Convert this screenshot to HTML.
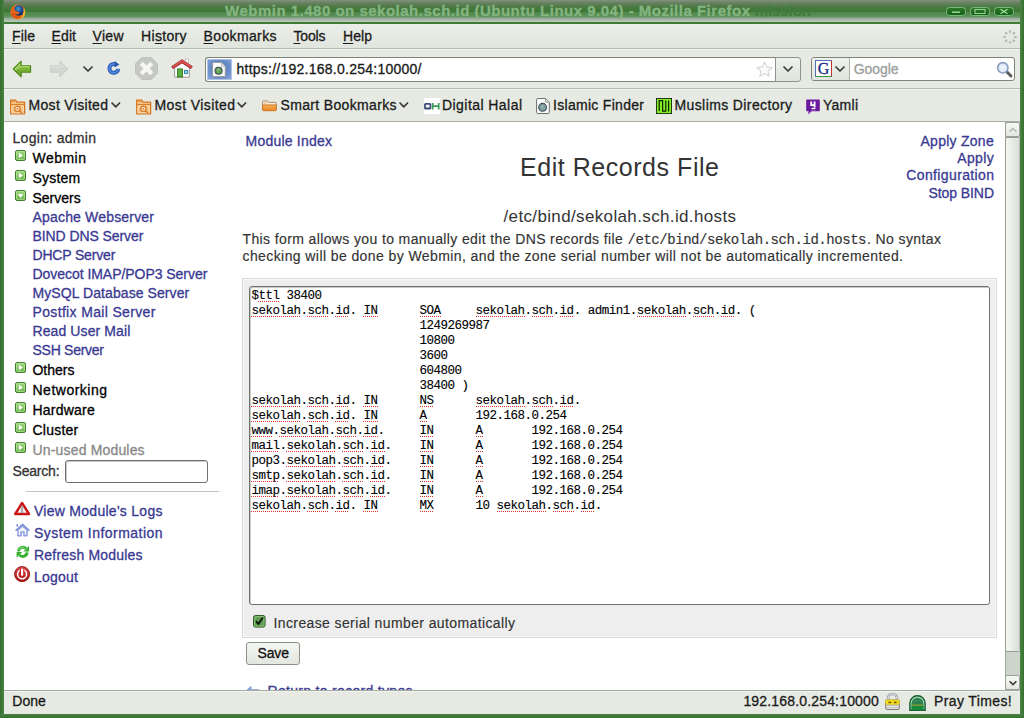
<!DOCTYPE html>
<html>
<head>
<meta charset="utf-8">
<title>Webmin 1.480 on sekolah.sch.id (Ubuntu Linux 9.04) - Mozilla Firefox</title>
<style>
html,body{margin:0;padding:0;}
body{width:1024px;height:718px;overflow:hidden;position:relative;background:#3f7a38;font-family:"Liberation Sans",sans-serif;font-size:14px;color:#1a1a1a;}
.abs{position:absolute;}
.t{position:absolute;white-space:pre;line-height:20px;height:20px;-webkit-text-stroke:0.3px;}
svg{position:absolute;overflow:visible;}
#titlebar{left:4px;top:0;width:1016px;height:24px;background:linear-gradient(to bottom,#80917d 0px,#748970 1.5px,#66805f 3px,#5a7d52 5px,#4a7a40 7px,#437a3a 9px,#3f7536 11.5px,#518848 11.6px,#518a4c 14px,#5f9360 16.5px,#7a9c78 17.5px,#9aab99 18.5px,#a8b4a8 19.5px,#b6cab3 21.5px,#b8d0b4 22px,#3f7a38 22px,#3f7a38 24px);}
#chrome{left:4px;top:24px;width:1016px;height:98px;background:#e6eae3;}
#menubar{left:4px;top:24px;width:1016px;height:24px;background:linear-gradient(to bottom,#ebeee9,#e0e5dd);}
.sep{position:absolute;left:4px;width:1016px;height:1px;background:#b4bcb2;}
.hl{position:absolute;left:4px;width:1016px;height:1px;background:#f4f6f2;}
.m{font-family:"Liberation Mono",monospace;}
.z{z-index:6;}
.ns{-webkit-text-stroke:0;}
.ls{-webkit-text-stroke:0.15px;}
.menu u{text-decoration:underline;text-underline-offset:2px;}
#content{left:4px;top:122px;width:1001px;height:568px;background:#fff;}
#clip{left:4px;top:122px;width:1001px;height:567px;overflow:hidden;}
#clip .t{margin-left:-4px;margin-top:-122px;}
#statusbar{z-index:5;left:4px;top:690px;width:1016px;height:24px;background:#e6eae3;border-top:1px solid #a4aca2;box-sizing:border-box;box-shadow:inset 0 1px 0 #f2f4f0;}
#urlbar{left:205px;top:57px;width:571px;height:25px;box-sizing:border-box;border:1px solid #7d857b;border-right:none;border-radius:3px 0 0 3px;background:#fff;}
#urldrop{left:775px;top:57px;width:26px;height:25px;box-sizing:border-box;border:1px solid #8b938a;border-radius:0 3px 3px 0;background:linear-gradient(#eef1ec,#dfe4dc);}
#idbox{left:207px;top:59px;width:25px;height:21px;background:radial-gradient(ellipse at 50% 45%,#5a80c0 0%,#6388c6 45%,#8eaadb 100%);box-shadow:inset 0 0 0 1px rgba(220,230,246,0.55);}
#searchbar{left:811px;top:57px;width:204px;height:24px;box-sizing:border-box;border:1px solid #7d857b;border-radius:3px;background:#fff;}
#engine{left:812px;top:58px;width:37px;height:22px;background:linear-gradient(#eef1ec,#dfe4dc);border-right:1px solid #a8b0a6;border-radius:2px 0 0 2px;}
#formbox{left:242px;top:278px;width:755px;height:360px;box-sizing:border-box;background:#eeeeee;border:1px solid #d9d9d9;box-shadow:inset 0 0 0 1px #f8f8f8;}
#ta{left:249px;top:286px;width:741px;height:319px;box-sizing:border-box;background:#fff;border:1px solid #6b736b;border-radius:3px;box-shadow:inset 1px 1px 0 #c8ccc8;}
#tatext{left:251.4px;top:289px;margin:0;font-family:"Liberation Mono",monospace;font-size:12.5px;letter-spacing:-0.5px;line-height:15px;color:#000;white-space:pre;-webkit-text-stroke:0.12px;}
#tatext i{font-style:normal;background:repeating-linear-gradient(to right,#e03030 0,#e03030 1px,transparent 1px,transparent 2px) left 12px/100% 1px no-repeat;}
#savebtn{left:246px;top:642px;width:54px;height:23px;box-sizing:border-box;border:1px solid #8a9288;border-radius:3px;background:linear-gradient(#f4f6f2,#e2e6df);}
#sinput{left:65px;top:460px;width:143px;height:23px;box-sizing:border-box;border:1px solid #6b736b;border-radius:3px;background:#fff;box-shadow:inset 1px 1px 0 #c8ccc8;}
#hr{left:26px;top:491px;width:193px;height:1px;background:#c2c2c2;}
#scroll{left:1005px;top:122px;width:15px;height:568px;background:#cdd4ca;border-left:1px solid #a4aca2;box-sizing:border-box;}
#thumb{left:1005px;top:137px;width:15px;height:515px;box-sizing:border-box;border:1px solid #969e94;border-right-color:#b4bcb2;border-radius:2px;background:linear-gradient(to right,#f6f8f4,#e6eae3 55%,#dbe0d8);}
.sbtn{left:1005px;width:15px;height:15px;box-sizing:border-box;border:1px solid #9aa298;border-radius:2px;background:linear-gradient(#f6f8f4,#e4e8e1);}
</style>
</head>
<body>
<div class="abs" style="left:0;top:0;width:4px;height:718px;background:linear-gradient(to right,#356e30,#3f7a38 50%,#4a8044)"></div><div class="abs" style="left:1020px;top:0;width:4px;height:718px;background:linear-gradient(to right,#4f8649,#3f7a38 50%,#366f31)"></div><div class="abs" style="left:0;top:714px;width:1024px;height:4px;background:linear-gradient(to bottom,#4a8044,#3f7a38 50%,#356e30)"></div>
<div id="titlebar" class="abs"></div>
<div id="chrome" class="abs"></div>
<div id="menubar" class="abs"></div>
<div class="sep" style="top:48px"></div>
<div class="hl" style="top:49px"></div>
<div class="sep" style="top:88px"></div>
<div class="hl" style="top:89px"></div>
<div class="sep" style="top:121px;background:#a8b0a6"></div>
<div id="urlbar" class="abs"></div><div id="urldrop" class="abs"></div><div id="idbox" class="abs"></div>
<div id="searchbar" class="abs"></div><div id="engine" class="abs"></div>
<div id="content" class="abs"></div>
<div id="formbox" class="abs"></div>
<div id="ta" class="abs"></div>
<pre id="tatext" class="abs">$<i>ttl</i> 38400
<i>sekolah</i>.<i>sch</i>.<i>id</i>. <i>IN</i>      <i>SOA</i>     <i>sekolah</i>.<i>sch</i>.<i>id</i>. admin1.<i>sekolah</i>.<i>sch</i>.<i>id</i>. (
                        1249269987
                        10800
                        3600
                        604800
                        38400 )
<i>sekolah</i>.<i>sch</i>.<i>id</i>. <i>IN</i>      <i>NS</i>      <i>sekolah</i>.<i>sch</i>.<i>id</i>.
<i>sekolah</i>.<i>sch</i>.<i>id</i>. <i>IN</i>      <i>A</i>       192.168.0.254
<i>www</i>.<i>sekolah</i>.<i>sch</i>.<i>id</i>.     <i>IN</i>      <i>A</i>       192.168.0.254
<i>mail</i>.<i>sekolah</i>.<i>sch</i>.<i>id</i>.    <i>IN</i>      <i>A</i>       192.168.0.254
pop3.<i>sekolah</i>.<i>sch</i>.<i>id</i>.    <i>IN</i>      <i>A</i>       192.168.0.254
<i>smtp</i>.<i>sekolah</i>.<i>sch</i>.<i>id</i>.    <i>IN</i>      <i>A</i>       192.168.0.254
<i>imap</i>.<i>sekolah</i>.<i>sch</i>.<i>id</i>.    <i>IN</i>      <i>A</i>       192.168.0.254
<i>sekolah</i>.<i>sch</i>.<i>id</i>. <i>IN</i>      <i>MX</i>      10 <i>sekolah</i>.<i>sch</i>.<i>id</i>.</pre>
<div id="savebtn" class="abs"></div>
<div id="sinput" class="abs"></div>
<div id="hr" class="abs"></div>
<div id="scroll" class="abs"></div><div id="thumb" class="abs"></div>
<div class="sbtn abs" style="top:122px"></div><div class="sbtn abs" style="top:675px"></div>
<div id="statusbar" class="abs"></div>
<svg width="0" height="0" style="left:0;top:0"><defs>
<linearGradient id="gG" x1="0" y1="0" x2="0" y2="1"><stop offset="0" stop-color="#a4dc84"/><stop offset="1" stop-color="#62b044"/></linearGradient>
<linearGradient id="gBack" x1="0" y1="0" x2="0" y2="1"><stop offset="0" stop-color="#9ed04e"/><stop offset="1" stop-color="#5a9a1e"/></linearGradient>
<linearGradient id="gBtn" x1="0" y1="0" x2="0" y2="1"><stop offset="0" stop-color="#2f7a2c"/><stop offset="1" stop-color="#145c14"/></linearGradient>
<radialGradient id="gFx" cx="0.45" cy="0.35" r="0.6"><stop offset="0" stop-color="#4aa0d0"/><stop offset="0.6" stop-color="#1c4a94"/><stop offset="1" stop-color="#10285c"/></radialGradient>
<linearGradient id="gFox" x1="0" y1="0" x2="1" y2="1"><stop offset="0" stop-color="#f09020"/><stop offset="0.5" stop-color="#e86010"/><stop offset="1" stop-color="#f0c030"/></linearGradient>
<linearGradient id="gRed" x1="0" y1="0" x2="0" y2="1"><stop offset="0" stop-color="#e04848"/><stop offset="1" stop-color="#a81414"/></linearGradient>
<linearGradient id="gFold" x1="0" y1="0" x2="0" y2="1"><stop offset="0" stop-color="#f6b05c"/><stop offset="1" stop-color="#ee8622"/></linearGradient>
</defs></svg>
<svg style="left:10px;top:4.4px;" width="16" height="16" viewBox="0 0 16 16"><circle cx="8" cy="8" r="7.5" fill="url(#gFox)"/><circle cx="8.7" cy="6.4" r="5.3" fill="url(#gFx)"/><path d="M0.8 6.4 C1.6 3.6 3.4 2.4 5.2 2.6 C4 4.2 4.2 5.8 5.6 7 C7 8 9 7.6 9.6 8.8 C8.8 10.6 6.2 10.8 4.4 9.8 C5.8 12.6 9.8 13 12.6 10.4 C11.4 15 5.4 16 2.4 12.6 C1 11 0.4 8.6 0.8 6.4Z" fill="#e8641a"/><path d="M13.3 3.4 C15.6 6.6 15.2 11 12.4 13.4 C13.6 10.4 13.8 6.8 13.3 3.4Z" fill="#f4c838"/><path d="M2 9 C3 12.6 7 14.4 10.6 12.8" fill="none" stroke="#d84a10" stroke-width="1.2"/></svg>
<svg style="left:946px;top:7px;" width="20" height="9" viewBox="0 0 20 9"><rect x="0.5" y="0.5" width="19" height="8" rx="3" fill="url(#gBtn)" stroke="#7cba7c" stroke-width="1"/><rect x="6" y="4.4" width="8" height="1.6" fill="#8fd08f"/></svg>
<svg style="left:970px;top:7px;" width="20" height="9" viewBox="0 0 20 9"><rect x="0.5" y="0.5" width="19" height="8" rx="3" fill="url(#gBtn)" stroke="#7cba7c" stroke-width="1"/><rect x="5" y="2.5" width="10" height="4" fill="none" stroke="#8fd08f" stroke-width="1.1"/></svg>
<svg style="left:994px;top:7px;" width="20" height="9" viewBox="0 0 20 9"><rect x="0.5" y="0.5" width="19" height="8" rx="3" fill="url(#gBtn)" stroke="#7cba7c" stroke-width="1"/><path d="M6.5 2.2 L10 4.5 L13.5 2.2 M6.5 6.8 L10 4.5 L13.5 6.8" fill="none" stroke="#9fe09f" stroke-width="1.2"/></svg>
<svg style="left:1001.9px;top:28.9px;" width="16" height="16" viewBox="0 0 16 16"><path d="M12.20 8.00 L14.60 8.00" stroke="#a9b1a8" stroke-width="1.8"/><path d="M10.97 10.97 L12.67 12.67" stroke="#a9b1a8" stroke-width="1.8"/><path d="M8.00 12.20 L8.00 14.60" stroke="#a9b1a8" stroke-width="1.8"/><path d="M5.03 10.97 L3.33 12.67" stroke="#a9b1a8" stroke-width="1.8"/><path d="M3.80 8.00 L1.40 8.00" stroke="#a9b1a8" stroke-width="1.8"/><path d="M5.03 5.03 L3.33 3.33" stroke="#a9b1a8" stroke-width="1.8"/><path d="M8.00 3.80 L8.00 1.40" stroke="#a9b1a8" stroke-width="1.8"/><path d="M10.97 5.03 L12.67 3.33" stroke="#a9b1a8" stroke-width="1.8"/></svg>
<svg style="left:12px;top:60px;" width="20" height="18" viewBox="0 0 20 18"><path d="M9.2 1.2 L1.2 9 L9.2 16.8 L9.2 12.2 L18.6 12.2 L18.6 5.8 L9.2 5.8 Z" fill="url(#gBack)" stroke="#4c8a1c" stroke-width="1.1" stroke-linejoin="round"/><path d="M8.2 3.8 L3 9 L4 9.5 L8.2 6.8 L17.6 6.8" fill="none" stroke="#c8e890" stroke-width="0.9" opacity="0.9"/></svg>
<svg style="left:49px;top:60px;" width="20" height="18" viewBox="0 0 20 18"><path d="M10.8 1.2 L18.8 9 L10.8 16.8 L10.8 12.2 L1.4 12.2 L1.4 5.8 L10.8 5.8 Z" fill="#d3d7d1" stroke="#c9cdc7" stroke-width="1" stroke-linejoin="round"/><path d="M2.4 6.8 L11.8 6.8 L11.8 4 L15.5 7.6" fill="none" stroke="#e2e5e0" stroke-width="0.9"/></svg>
<svg style="left:83.0px;top:65.8px;" width="10" height="6" viewBox="0 0 10 6"><path d="M1 1 L5.0 5 L9 1" fill="none" stroke="#3a3a3a" stroke-width="1.7" stroke-linecap="round" stroke-linejoin="round"/></svg>
<svg style="left:106px;top:59px;" width="16" height="17" viewBox="0 0 16 17"><path d="M9.6 5.4 A4.4 4.4 0 1 0 12.2 9.8" fill="none" stroke="#2a58b0" stroke-width="4"/><path d="M9.6 5.4 A4.4 4.4 0 1 0 12.2 9.8" fill="none" stroke="#4f84dc" stroke-width="2"/><path d="M8.6 2 L13.4 5.6 L8.6 8.4 Z" fill="#2a58b0"/></svg>
<svg style="left:135px;top:57px;" width="23" height="23" viewBox="0 0 23 23"><path d="M6.8 0.5 L16.2 0.5 L22.5 6.8 L22.5 16.2 L16.2 22.5 L6.8 22.5 L0.5 16.2 L0.5 6.8 Z" fill="#c6c8c5" stroke="#bfc2be" stroke-width="1"/><path d="M6.2 6.2 L16.8 16.8 M16.8 6.2 L6.2 16.8" stroke="#f6f7f5" stroke-width="4.2" stroke-linecap="butt"/></svg>
<svg style="left:171px;top:58px;" width="22" height="20" viewBox="0 0 22 20"><rect x="14.2" y="0.9" width="3.2" height="5" fill="#f6f6f6" stroke="#b4b4b4" stroke-width="0.7"/><path d="M3.6 8 L3.6 19.2 L18.4 19.2 L18.4 8 L11 3.4 Z" fill="#fbfbfb" stroke="#9c9c9c" stroke-width="1"/><path d="M0.7 8.5 L11 1.7 L21.3 8.5 L19.9 10.6 L11 4.9 L2.1 10.6 Z" fill="#d04242" stroke="#a22a2a" stroke-width="0.9" stroke-linejoin="round"/><path d="M2 8.4 L11 2.6 L20 8.4" fill="none" stroke="#e87070" stroke-width="0.7"/><rect x="6.6" y="11" width="4.8" height="8" fill="#5cb040" stroke="#2e7a1e" stroke-width="1"/><rect x="13.5" y="12.4" width="3.2" height="3.2" fill="#8ad0e8" stroke="#3a88a8" stroke-width="1"/></svg>
<svg style="left:212px;top:61.5px;" width="14" height="15" viewBox="0 0 14 15"><path d="M1.6 0.5 L9.5 0.5 L13.3 4.2 L13.3 13.4 Q13.3 14.5 12.2 14.5 L1.6 14.5 Q0.6 14.5 0.6 13.4 L0.6 1.6 Q0.6 0.5 1.6 0.5 Z" fill="#fbfbfb" stroke="#9a9e9a" stroke-width="1"/><path d="M9.5 0.8 L9.5 4.2 L13 4.2" fill="#e4e4e4" stroke="#9a9e9a" stroke-width="0.6"/><circle cx="6.6" cy="8.7" r="3.5" fill="#62a050" stroke="#3c5058" stroke-width="1.1"/><path d="M5 7.1 Q6.5 6.1 8 7.499999999999999 Q7 9.6 5.6 9.299999999999999Z" fill="#b0d8c0" opacity="0.5"/></svg>
<svg style="left:756px;top:61px;" width="17" height="16" viewBox="0 0 17 16"><path d="M8.5 1 L10.7 5.9 L16 6.5 L12 10.1 L13.2 15.3 L8.5 12.6 L3.8 15.3 L5 10.1 L1 6.5 L6.3 5.9 Z" fill="#fbfbfb" stroke="#d4d6d2" stroke-width="1.1" stroke-linejoin="round"/></svg>
<svg style="left:782.9px;top:65.8px;" width="10" height="6" viewBox="0 0 10 6"><path d="M1 1 L5.0 5 L9 1" fill="none" stroke="#3a3a3a" stroke-width="1.7" stroke-linecap="round" stroke-linejoin="round"/></svg>
<svg style="left:815px;top:60.3px;" width="17" height="17" viewBox="0 0 17 17"><rect x="0.5" y="0.5" width="16" height="16" fill="#fff" stroke="#5070b0" stroke-width="1"/><path d="M0.5 16.5 L16.5 16.5" stroke="#3a9a3a" stroke-width="1"/><path d="M16.5 0.5 L16.5 16.5" stroke="#c03030" stroke-width="1"/><text x="8.5" y="14" font-family="Liberation Serif,serif" font-size="16" text-anchor="middle" fill="#1a2a80" stroke="#1a2a80" stroke-width="0.3">G</text></svg>
<svg style="left:834.8px;top:65.8px;" width="10" height="6" viewBox="0 0 10 6"><path d="M1 1 L5.0 5 L9 1" fill="none" stroke="#3a3a3a" stroke-width="1.7" stroke-linecap="round" stroke-linejoin="round"/></svg>
<svg style="left:996px;top:61px;" width="17" height="17" viewBox="0 0 17 17"><path d="M10 10 L15 15" stroke="#5a5a5a" stroke-width="3" stroke-linecap="round"/><circle cx="6.8" cy="6.8" r="5.2" fill="#cfe0f4" stroke="#8aa0c0" stroke-width="1.6"/><circle cx="6.8" cy="6.8" r="3.6" fill="#e8f0fa"/></svg>
<svg style="left:10px;top:98.6px;" width="16" height="16" viewBox="0 0 16 16"><path d="M0.7 1.2 L5.6 1.2 L6.8 3.2 L14.6 3.2 L14.6 14.8 L0.7 14.8 Z" fill="#f7c384" stroke="#d4741e" stroke-width="1.3" stroke-linejoin="round"/><path d="M1.6 2.4 L4.8 2.4" stroke="#e89040" stroke-width="1"/><path d="M1.2 5.6 L14 5.6" stroke="#d4741e" stroke-width="1"/><path d="M1.8 6.8 L13.4 6.8 L13.4 13.8 L1.8 13.8 Z" fill="none" stroke="#fbe0bc" stroke-width="0.8"/><circle cx="7.4" cy="9.8" r="2.7" fill="#fbe6cc" stroke="#d4741e" stroke-width="1.2"/><circle cx="7.4" cy="9.8" r="1" fill="#e08a3c"/><path d="M9.4 11.8 L12 14" stroke="#d4741e" stroke-width="1.4"/></svg>
<svg style="left:136px;top:98.6px;" width="16" height="16" viewBox="0 0 16 16"><path d="M0.7 1.2 L5.6 1.2 L6.8 3.2 L14.6 3.2 L14.6 14.8 L0.7 14.8 Z" fill="#f7c384" stroke="#d4741e" stroke-width="1.3" stroke-linejoin="round"/><path d="M1.6 2.4 L4.8 2.4" stroke="#e89040" stroke-width="1"/><path d="M1.2 5.6 L14 5.6" stroke="#d4741e" stroke-width="1"/><path d="M1.8 6.8 L13.4 6.8 L13.4 13.8 L1.8 13.8 Z" fill="none" stroke="#fbe0bc" stroke-width="0.8"/><circle cx="7.4" cy="9.8" r="2.7" fill="#fbe6cc" stroke="#d4741e" stroke-width="1.2"/><circle cx="7.4" cy="9.8" r="1" fill="#e08a3c"/><path d="M9.4 11.8 L12 14" stroke="#d4741e" stroke-width="1.4"/></svg>
<svg style="left:262px;top:99.6px;" width="15" height="12" viewBox="0 0 15 12"><path d="M0.7 9.6 L0.7 1.6 Q0.7 0.9 1.4 0.9 L5.2 0.9 L6.4 2.3 L13.4 2.3 Q14.2 2.3 14.2 3 L14.2 9.6 Z" fill="#f6efe6" stroke="#a88868" stroke-width="1"/><path d="M2 3 L5 3" stroke="#f0a860" stroke-width="1"/><path d="M1.2 4.9 L13.8 4.9 Q14.4 4.9 14.4 5.5 L14.2 10 Q14.2 10.7 13.5 10.7 L1.4 10.7 Q0.7 10.7 0.7 10 L0.6 5.5 Q0.6 4.9 1.2 4.9 Z" fill="url(#gFold)" stroke="#c8701c" stroke-width="0.9"/></svg>
<svg style="left:111.2px;top:101.85px;" width="9.6" height="5.9" viewBox="0 0 9.6 5.9"><path d="M1 1 L4.8 4.9 L8.6 1" fill="none" stroke="#3a3a3a" stroke-width="1.7" stroke-linecap="round" stroke-linejoin="round"/></svg>
<svg style="left:237.2px;top:101.85px;" width="9.6" height="5.9" viewBox="0 0 9.6 5.9"><path d="M1 1 L4.8 4.9 L8.6 1" fill="none" stroke="#3a3a3a" stroke-width="1.7" stroke-linecap="round" stroke-linejoin="round"/></svg>
<svg style="left:399.4px;top:101.85px;" width="9.6" height="5.9" viewBox="0 0 9.6 5.9"><path d="M1 1 L4.8 4.9 L8.6 1" fill="none" stroke="#3a3a3a" stroke-width="1.7" stroke-linecap="round" stroke-linejoin="round"/></svg>
<svg style="left:424px;top:98px;" width="16" height="16" viewBox="0 0 16 16"><rect width="16" height="16" fill="#fff"/><rect x="1" y="5.9" width="5.4" height="4.6" rx="0.6" fill="none" stroke="#3c4a78" stroke-width="1.8"/><path d="M8.7 5 L8.7 11.4 M14.7 5 L14.7 11.4 M8.7 8.2 L14.7 8.2" stroke="#3a9a58" stroke-width="1.7"/></svg>
<svg style="left:536px;top:98px;" width="14" height="16" viewBox="0 0 14 16"><path d="M1.6 0.5 L9.5 0.5 L13.3 4.2 L13.3 14.4 Q13.3 15.5 12.2 15.5 L1.6 15.5 Q0.6 15.5 0.6 14.4 L0.6 1.6 Q0.6 0.5 1.6 0.5 Z" fill="#fbfbfb" stroke="#6e726e" stroke-width="1"/><path d="M9.5 0.8 L9.5 4.2 L13 4.2" fill="#e4e4e4" stroke="#6e726e" stroke-width="0.6"/><circle cx="6.6" cy="9.28" r="3.9" fill="#7f9fa0" stroke="#3c5058" stroke-width="1.1"/><path d="M5 7.68 Q6.5 6.68 8 8.08 Q7 10.18 5.6 9.879999999999999Z" fill="#b0d8c0" opacity="0.5"/></svg>
<svg style="left:656px;top:98px;" width="16" height="16" viewBox="0 0 16 16"><rect x="0.5" y="0.5" width="15" height="15" fill="#82ee22" stroke="#0c1a06" stroke-width="1"/><path d="M3.2 13 L3.2 2.6 L6.6 2.6 L6.6 13.2 L9.8 13.2 L9.8 2.4 M12.6 2.4 L12.6 13.4" fill="none" stroke="#0e2208" stroke-width="1.2"/><rect x="1" y="1" width="14" height="14" fill="none" stroke="#a4f45a" stroke-width="0.5" opacity="0.6"/></svg>
<svg style="left:806px;top:98.5px;" width="14" height="16" viewBox="0 0 14 16"><path d="M1 0.5 L13 0.5 Q13.8 0.5 13.8 1.4 L13.8 11.4 Q13.8 12.2 13 12.2 L5.4 12.2 L2.2 15.4 L2.6 12.2 L1 12.2 Q0.2 12.2 0.2 11.4 L0.2 1.4 Q0.2 0.5 1 0.5Z" fill="#6c1a9e"/><path d="M5.2 2.4 L5.2 6.2 L8.6 6.2 M8.6 2.4 L8.6 8.6" fill="none" stroke="#fff" stroke-width="1.8"/><path d="M5.6 9.4 L9.4 9.4" stroke="#fff" stroke-width="1.2"/><path d="M6.2 11 L7.2 11 M8.2 11 L9.2 11" stroke="#f0e0ff" stroke-width="0.9"/></svg>
<svg style="left:15px;top:150px;" width="11" height="11" viewBox="0 0 11 11"><rect x="0.5" y="0.5" width="10" height="10" rx="1.6" fill="url(#gG)" stroke="#3f7f2c" stroke-width="1"/><rect x="1.6" y="1.6" width="7.8" height="7.8" rx="0.8" fill="none" stroke="#c4eca8" stroke-width="0.8" opacity="0.8"/><path d="M3.9 2.7 L8 5.5 L3.9 8.3 Z" fill="#fff"/></svg>
<svg style="left:15px;top:170px;" width="11" height="11" viewBox="0 0 11 11"><rect x="0.5" y="0.5" width="10" height="10" rx="1.6" fill="url(#gG)" stroke="#3f7f2c" stroke-width="1"/><rect x="1.6" y="1.6" width="7.8" height="7.8" rx="0.8" fill="none" stroke="#c4eca8" stroke-width="0.8" opacity="0.8"/><path d="M3.9 2.7 L8 5.5 L3.9 8.3 Z" fill="#fff"/></svg>
<svg style="left:15px;top:190px;" width="11" height="11" viewBox="0 0 11 11"><rect x="0.5" y="0.5" width="10" height="10" rx="1.6" fill="url(#gG)" stroke="#3f7f2c" stroke-width="1"/><rect x="1.6" y="1.6" width="7.8" height="7.8" rx="0.8" fill="none" stroke="#c4eca8" stroke-width="0.8" opacity="0.8"/><path d="M2.9 4 L8.3 4 L5.6 7.9 Z" fill="#fff"/></svg>
<svg style="left:15px;top:362px;" width="11" height="11" viewBox="0 0 11 11"><rect x="0.5" y="0.5" width="10" height="10" rx="1.6" fill="url(#gG)" stroke="#3f7f2c" stroke-width="1"/><rect x="1.6" y="1.6" width="7.8" height="7.8" rx="0.8" fill="none" stroke="#c4eca8" stroke-width="0.8" opacity="0.8"/><path d="M3.9 2.7 L8 5.5 L3.9 8.3 Z" fill="#fff"/></svg>
<svg style="left:15px;top:382px;" width="11" height="11" viewBox="0 0 11 11"><rect x="0.5" y="0.5" width="10" height="10" rx="1.6" fill="url(#gG)" stroke="#3f7f2c" stroke-width="1"/><rect x="1.6" y="1.6" width="7.8" height="7.8" rx="0.8" fill="none" stroke="#c4eca8" stroke-width="0.8" opacity="0.8"/><path d="M3.9 2.7 L8 5.5 L3.9 8.3 Z" fill="#fff"/></svg>
<svg style="left:15px;top:402px;" width="11" height="11" viewBox="0 0 11 11"><rect x="0.5" y="0.5" width="10" height="10" rx="1.6" fill="url(#gG)" stroke="#3f7f2c" stroke-width="1"/><rect x="1.6" y="1.6" width="7.8" height="7.8" rx="0.8" fill="none" stroke="#c4eca8" stroke-width="0.8" opacity="0.8"/><path d="M3.9 2.7 L8 5.5 L3.9 8.3 Z" fill="#fff"/></svg>
<svg style="left:15px;top:422px;" width="11" height="11" viewBox="0 0 11 11"><rect x="0.5" y="0.5" width="10" height="10" rx="1.6" fill="url(#gG)" stroke="#3f7f2c" stroke-width="1"/><rect x="1.6" y="1.6" width="7.8" height="7.8" rx="0.8" fill="none" stroke="#c4eca8" stroke-width="0.8" opacity="0.8"/><path d="M3.9 2.7 L8 5.5 L3.9 8.3 Z" fill="#fff"/></svg>
<svg style="left:15px;top:442px;" width="11" height="11" viewBox="0 0 11 11"><rect x="0.5" y="0.5" width="10" height="10" rx="1.6" fill="url(#gG)" stroke="#3f7f2c" stroke-width="1"/><rect x="1.6" y="1.6" width="7.8" height="7.8" rx="0.8" fill="none" stroke="#c4eca8" stroke-width="0.8" opacity="0.8"/><path d="M3.9 2.7 L8 5.5 L3.9 8.3 Z" fill="#fff"/></svg>
<svg style="left:14px;top:500.5px;" width="16.2" height="14.5" viewBox="0 0 16.2 14.5"><path d="M8.1 2 L15 13 L1.2 13 Z" fill="#f6f2f2" stroke="#cc1616" stroke-width="2.4" stroke-linejoin="round"/><path d="M8.1 5.2 L8.1 12" stroke="#8c9a9a" stroke-width="2"/><path d="M8.1 4.4 L8.1 11.8" stroke="#c8d0d0" stroke-width="0.8"/></svg>
<svg style="left:14.8px;top:522.8px;" width="15" height="13.6" viewBox="0 0 15 13.6"><path d="M2.2 1.2 L2.2 3.6" stroke="#6878c8" stroke-width="1.5"/><path d="M0.9 7.2 L7.5 1.2 L14.1 7.2 L12.4 7.2 L7.5 3.2 L2.6 7.2 Z" fill="#93a3e2" stroke="#7c8edc" stroke-width="1.3" stroke-linejoin="round"/><path d="M3 6.6 L3 12.8 L6 12.8 L6 9 L9 9 L9 12.8 L12 12.8 L12 6.6 L7.5 3 Z" fill="#f4f6fe" stroke="#8c9ee0" stroke-width="1.5" stroke-linejoin="round"/></svg>
<svg style="left:15.6px;top:545px;" width="13.6" height="13.6" viewBox="0 0 13.6 13.6"><path d="M2.5 6.3 A4.4 4.4 0 0 1 10 3.5" fill="none" stroke="#35ae2e" stroke-width="2.9"/><path d="M7.4 6.5 L13 6.5 L13 0.9 Z" fill="#35ae2e"/><path d="M11.1 7.3 A4.4 4.4 0 0 1 3.6 10.1" fill="none" stroke="#35ae2e" stroke-width="2.9"/><path d="M6.2 7.1 L0.6 7.1 L0.6 12.7 Z" fill="#35ae2e"/><path d="M2.6 5.4 A4.4 4.4 0 0 1 8.6 2.6" fill="none" stroke="#8fe480" stroke-width="0.9"/></svg>
<svg style="left:14px;top:565.8px;" width="16.2" height="16.2" viewBox="0 0 16.2 16.2"><circle cx="8.1" cy="8.1" r="7.6" fill="url(#gRed)" stroke="#8e1010" stroke-width="0.8"/><circle cx="8.1" cy="8.3" r="4.5" fill="none" stroke="#fff" stroke-width="1.5"/><path d="M8.1 3.2 L8.1 8.8" stroke="#c82020" stroke-width="4.2"/><path d="M8.1 3.6 L8.1 8.8" stroke="#fff" stroke-width="2.2" stroke-linecap="round"/></svg>
<svg style="left:253px;top:614.6px;" width="12.6" height="12.6" viewBox="0 0 12.6 12.6"><rect x="0.5" y="0.5" width="11.6" height="11.6" rx="2" fill="#6aa85c" stroke="#2e5a28" stroke-width="1"/><rect x="1.7" y="1.7" width="9.2" height="9.2" rx="1" fill="#5c9c50" stroke="#9ccc8c" stroke-width="0.7"/><path d="M3 6.2 L5.4 9 L9.8 2.6" fill="none" stroke="#101810" stroke-width="1.9"/></svg>
<svg style="left:244px;top:685.5px;" width="16" height="12" viewBox="0 0 16 12"><path d="M7 0.5 L0.8 6 L7 11.5 L7 8.2 L15 8.2 L15 3.8 L7 3.8 Z" fill="#8aa8e8" stroke="#6a88d0" stroke-width="0.8"/></svg>
<svg style="left:884.5px;top:693px;z-index:6;" width="15" height="17" viewBox="0 0 15 17"><path d="M3 8 L3 5.4 A4.5 4.4 0 0 1 12 5.4 L12 8" fill="none" stroke="#9c9ca6" stroke-width="2.6"/><path d="M3 8 L3 5.4 A4.5 4.4 0 0 1 12 5.4 L12 8" fill="none" stroke="#f2f2f6" stroke-width="1"/><rect x="0.8" y="7.2" width="13.4" height="9.2" rx="1.2" fill="#f2f2ee" stroke="#6a6a66" stroke-width="1"/><rect x="0.6" y="6.8" width="13.8" height="4.6" rx="0.8" fill="#f4e020" stroke="#c8b018" stroke-width="0.6"/><rect x="3.4" y="8.6" width="2.8" height="1.6" fill="#7a5a08"/><rect x="8.8" y="8.6" width="2.8" height="1.6" fill="#7a5a08"/><path d="M1.6 12.6 L13.4 12.6 M1.6 14.4 L13.4 14.4" stroke="#b4b4b0" stroke-width="0.9"/></svg>
<svg style="left:908.5px;top:694.6px;z-index:6;" width="17" height="15.4" viewBox="0 0 17 15.4"><path d="M0.9 15.2 L0.9 8.2 A7.6 7.4 0 0 1 16.1 8.2 L16.1 15.2 Z" fill="#a8e0b8" stroke="#14582a" stroke-width="1.4"/><path d="M2.6 15.2 L2.6 8.6 A5.9 5.8 0 0 1 14.4 8.6 L14.4 15.2 Z" fill="#2d7d4e"/><rect x="2.6" y="9.4" width="11.8" height="1.6" fill="#7a9a3c"/><rect x="2.6" y="11" width="11.8" height="4.2" fill="#168a3a"/><path d="M4.6 7.6 Q8.5 3.4 12.4 7.6" fill="none" stroke="#5aa87a" stroke-width="0.9" stroke-dasharray="1.4 1"/></svg>
<svg style="left:1008.5px;top:126.5px;" width="8" height="6" viewBox="0 0 8 6"><path d="M0.6 4.8 L4 1.4 L7.4 4.8" fill="none" stroke="#b4bab2" stroke-width="1.5"/></svg>
<svg style="left:1008.5px;top:679.5px;" width="8" height="6" viewBox="0 0 8 6"><path d="M0.6 1.2 L4 4.6 L7.4 1.2" fill="none" stroke="#3a3a3a" stroke-width="1.6"/></svg>
<div class="t" style="left:225px;top:1.10px;font-size:15px;color:#84b481;letter-spacing:0.500px;font-weight:bold;">Webmin 1.480 on sekolah.sch.id (Ubuntu Linux 9.04) - Mozilla Firefox</div>
<div class="t" style="left:754.7px;top:1.10px;font-size:15px;color:#437a3e;letter-spacing:-0.065px;font-weight:bold;">mission</div>
<div class="t menu" style="left:12px;top:26.45px;font-size:14px;color:#1a1a1a;letter-spacing:0.146px;"><u>F</u>ile</div>
<div class="t menu" style="left:51.5px;top:26.45px;font-size:14px;color:#1a1a1a;letter-spacing:0.125px;"><u>E</u>dit</div>
<div class="t menu" style="left:92.5px;top:26.45px;font-size:14px;color:#1a1a1a;letter-spacing:0.302px;"><u>V</u>iew</div>
<div class="t menu" style="left:141px;top:26.45px;font-size:14px;color:#1a1a1a;letter-spacing:0.323px;">Hi<u>s</u>tory</div>
<div class="t menu" style="left:203.5px;top:26.45px;font-size:14px;color:#1a1a1a;letter-spacing:0.371px;"><u>B</u>ookmarks</div>
<div class="t menu" style="left:293.5px;top:26.45px;font-size:14px;color:#1a1a1a;letter-spacing:-0.172px;"><u>T</u>ools</div>
<div class="t menu" style="left:343px;top:26.45px;font-size:14px;color:#1a1a1a;letter-spacing:0.068px;"><u>H</u>elp</div>
<div class="t" style="left:236.5px;top:59.15px;font-size:14px;color:#1a1a1a;letter-spacing:0.249px;">https://192.168.0.254:10000/</div>
<div class="t" style="left:853.7px;top:59.15px;font-size:14px;color:#9aa09a;letter-spacing:-0.051px;">Google</div>
<div class="t" style="left:28.5px;top:94.95px;font-size:14px;color:#1a1a1a;letter-spacing:0.318px;">Most Visited</div>
<div class="t" style="left:154.5px;top:94.95px;font-size:14px;color:#1a1a1a;letter-spacing:0.409px;">Most Visited</div>
<div class="t" style="left:280.5px;top:94.95px;font-size:14px;color:#1a1a1a;letter-spacing:0.339px;">Smart Bookmarks</div>
<div class="t" style="left:442px;top:94.95px;font-size:14px;color:#1a1a1a;letter-spacing:0.441px;">Digital Halal</div>
<div class="t" style="left:553px;top:94.95px;font-size:14px;color:#1a1a1a;letter-spacing:0.297px;">Islamic Finder</div>
<div class="t" style="left:674.5px;top:94.95px;font-size:14px;color:#1a1a1a;letter-spacing:0.392px;">Muslims Directory</div>
<div class="t" style="left:823px;top:94.95px;font-size:14px;color:#1a1a1a;letter-spacing:0.258px;">Yamli</div>
<div class="t" style="left:12.5px;top:128.15px;font-size:14px;color:#333;letter-spacing:0.303px;">Login: admin</div>
<div class="t" style="left:32.5px;top:147.75px;font-size:14px;color:#000;letter-spacing:0.481px;">Webmin</div>
<div class="t" style="left:32.5px;top:167.75px;font-size:14px;color:#000;letter-spacing:0.203px;">System</div>
<div class="t" style="left:32.5px;top:187.75px;font-size:14px;color:#000;letter-spacing:-0.006px;">Servers</div>
<div class="t" style="left:32.5px;top:206.65px;font-size:14px;color:#393992;letter-spacing:0.179px;">Apache Webserver</div>
<div class="t" style="left:32.5px;top:225.65px;font-size:14px;color:#393992;letter-spacing:-0.081px;">BIND DNS Server</div>
<div class="t" style="left:32.5px;top:244.65px;font-size:14px;color:#393992;letter-spacing:-0.175px;">DHCP Server</div>
<div class="t" style="left:32.5px;top:263.65px;font-size:14px;color:#393992;letter-spacing:-0.045px;">Dovecot IMAP/POP3 Server</div>
<div class="t" style="left:32.5px;top:282.65px;font-size:14px;color:#393992;letter-spacing:0.080px;">MySQL Database Server</div>
<div class="t" style="left:32.5px;top:301.65px;font-size:14px;color:#393992;letter-spacing:0.344px;">Postfix Mail Server</div>
<div class="t" style="left:32.5px;top:320.65px;font-size:14px;color:#393992;letter-spacing:0.101px;">Read User Mail</div>
<div class="t" style="left:32.5px;top:339.65px;font-size:14px;color:#393992;letter-spacing:-0.269px;">SSH Server</div>
<div class="t" style="left:32.5px;top:359.55px;font-size:14px;color:#000;letter-spacing:-0.023px;">Others</div>
<div class="t" style="left:32.5px;top:379.55px;font-size:14px;color:#000;letter-spacing:0.497px;">Networking</div>
<div class="t" style="left:32.5px;top:399.55px;font-size:14px;color:#000;letter-spacing:0.214px;">Hardware</div>
<div class="t" style="left:32.5px;top:419.55px;font-size:14px;color:#000;letter-spacing:0.223px;">Cluster</div>
<div class="t" style="left:32.5px;top:439.55px;font-size:14px;color:#888;letter-spacing:0.169px;">Un-used Modules</div>
<div class="t" style="left:12.5px;top:460.55px;font-size:14px;color:#333;letter-spacing:-0.192px;">Search:</div>
<div class="t" style="left:34px;top:500.95px;font-size:14px;color:#393992;letter-spacing:0.275px;">View Module&#x27;s Logs</div>
<div class="t" style="left:34px;top:523.15px;font-size:14px;color:#393992;letter-spacing:0.464px;">System Information</div>
<div class="t" style="left:34px;top:545.15px;font-size:14px;color:#393992;letter-spacing:0.198px;">Refresh Modules</div>
<div class="t" style="left:34px;top:567.15px;font-size:14px;color:#393992;letter-spacing:0.234px;">Logout</div>
<div class="t" style="left:245.5px;top:131.15px;font-size:14px;color:#393992;letter-spacing:0.222px;">Module Index</div>
<div class="t ns" style="left:520px;top:157.14px;font-size:25px;color:#333;letter-spacing:0.540px;">Edit Records File</div>
<div class="t ns" style="left:503.5px;top:207.11px;font-size:17px;color:#333;letter-spacing:0.359px;">/etc/bind/sekolah.sch.id.hosts</div>
<div class="t ls" style="left:242.5px;top:228.95px;font-size:14px;color:#333333;letter-spacing:0.378px;">This form allows you to manually edit the DNS records file </div>
<div class="t ls m" style="left:627.5px;top:230.07px;font-size:14px;color:#333333;letter-spacing:-0.450px;">/etc/bind/sekolah.sch.id.hosts</div>
<div class="t ls" style="left:867px;top:228.95px;font-size:14px;color:#333333;letter-spacing:0.397px;">. No syntax</div>
<div class="t ls" style="left:242.5px;top:246.15px;font-size:14px;color:#333333;letter-spacing:0.410px;">checking will be done by Webmin, and the zone serial number will not be automatically incremented.</div>
<div class="t" style="left:920.5px;top:131.15px;font-size:14px;color:#393992;letter-spacing:0.264px;">Apply Zone</div>
<div class="t" style="left:957.3px;top:148.15px;font-size:14px;color:#393992;letter-spacing:0.342px;">Apply</div>
<div class="t" style="left:906.3px;top:165.15px;font-size:14px;color:#393992;letter-spacing:0.368px;">Configuration</div>
<div class="t" style="left:928.5px;top:182.65px;font-size:14px;color:#393992;letter-spacing:-0.080px;">Stop BIND</div>
<div class="t ls" style="left:273.5px;top:612.65px;font-size:14px;color:#333333;letter-spacing:0.386px;">Increase serial number automatically</div>
<div class="t" style="left:257.5px;top:642.65px;font-size:14px;color:#111;letter-spacing:-0.141px;">Save</div>
<div class="t" style="left:267.5px;top:681.15px;font-size:14px;color:#393992;letter-spacing:0.309px;">Return to record types</div>
<div class="t z" style="left:12.3px;top:690.65px;font-size:14px;color:#1a1a1a;letter-spacing:0.010px;">Done</div>
<div class="t z" style="left:743.4px;top:690.65px;font-size:14px;color:#1a1a1a;letter-spacing:0.169px;">192.168.0.254:10000</div>
<div class="t z" style="left:934px;top:690.65px;font-size:14px;color:#1a1a1a;letter-spacing:0.379px;">Pray Times!</div>
</body>
</html>
